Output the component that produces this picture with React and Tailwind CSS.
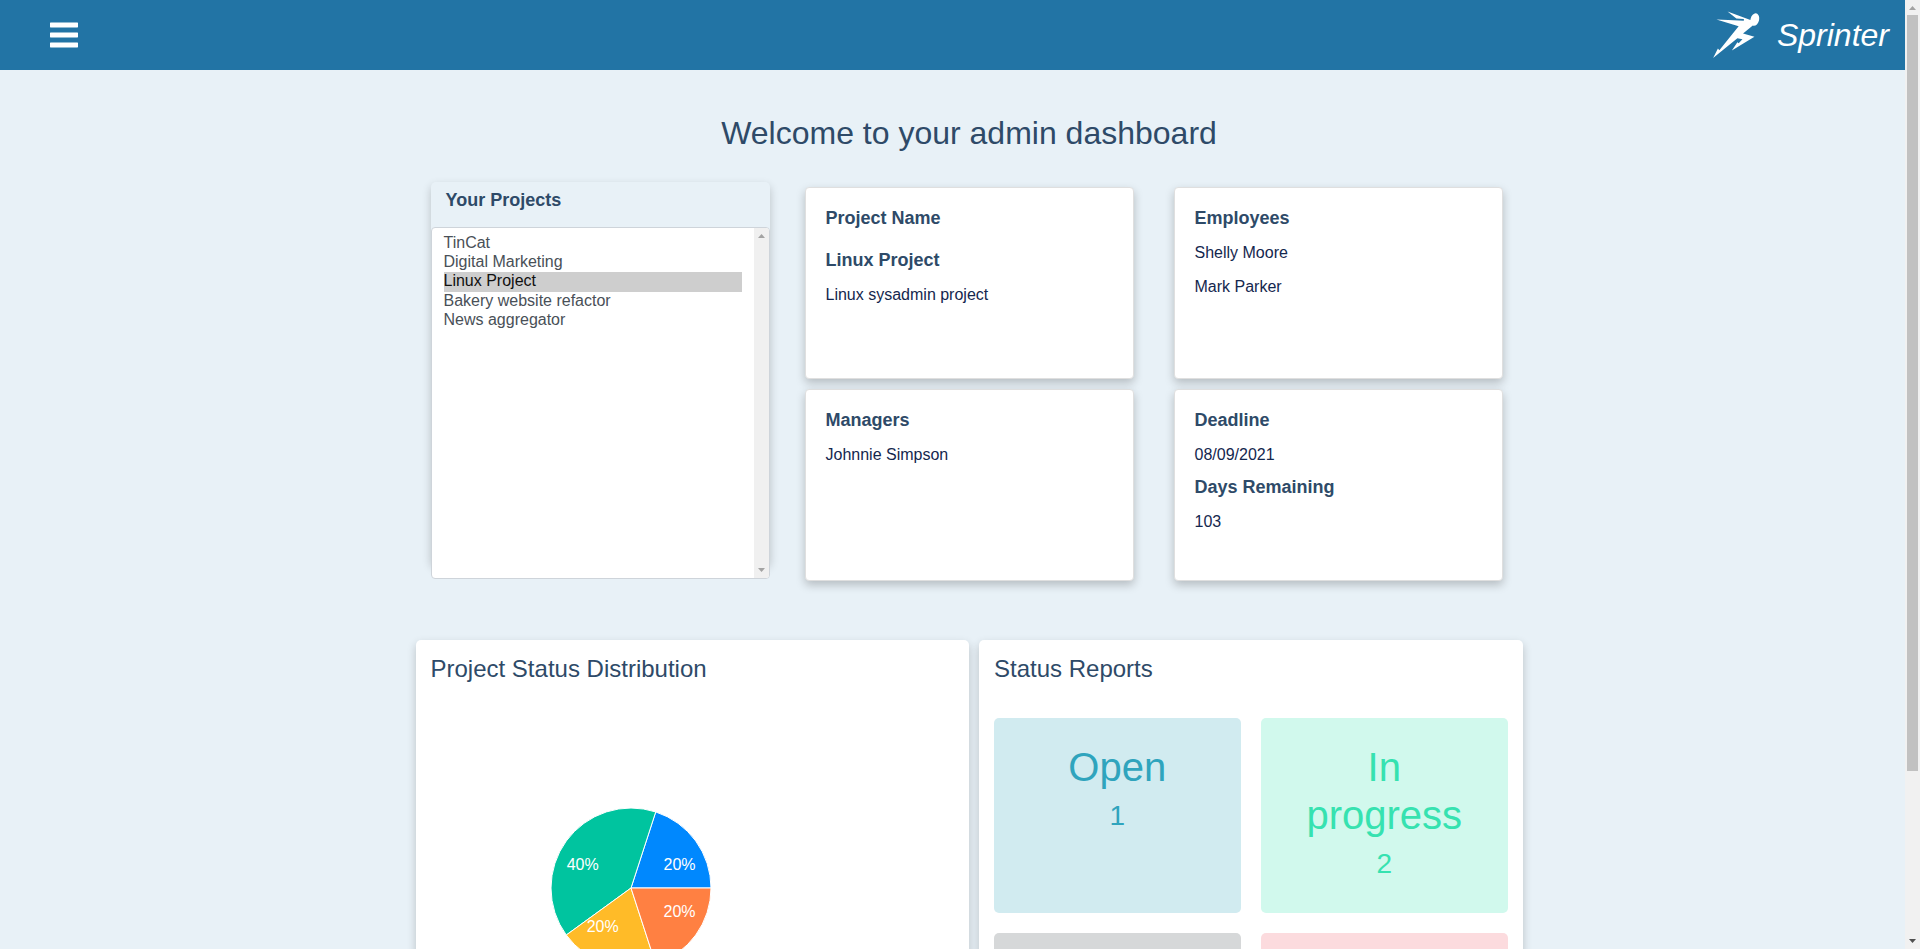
import { GiSprint } from "react-icons/gi";

const SANS = "font-['Liberation_Sans',Arial,sans-serif]";

function Nav() {
  return (
    <nav className="flex h-[70px] items-center justify-between bg-[#2274a5] pl-[50px] pr-4 text-white">
      <svg viewBox="0 0 28 26" className="h-[26px] w-[28px]" fill="#fff">
        <rect x="0" y="0.4" width="28" height="5" rx="0.6" />
        <rect x="0" y="10.4" width="28" height="5" rx="0.6" />
        <rect x="0" y="20.4" width="28" height="5" rx="0.6" />
      </svg>
      <div className="flex items-center gap-4">
        <GiSprint className="size-[50px]" />
        <span className="text-[32px] leading-none italic">Sprinter</span>
      </div>
    </nav>
  );
}

const projects = ["TinCat", "Digital Marketing", "Linux Project", "Bakery website refactor", "News aggregator"];

function ProjectList() {
  return (
    <section className="h-[382px] w-[339px] rounded-[5px] shadow-[0_4px_10px_0_rgba(0,0,0,0.2)]">
      <h2 className="h-[45px] pl-[14.5px] pt-[7px] text-[18px] leading-[22px] font-bold text-[#2e4a68]">Your Projects</h2>
      <div className="flex h-[352px] justify-between overflow-hidden rounded-[4px] border border-[#ced4da] bg-white">
        <ul className="w-[310px] pl-[11.5px] pt-[5px] text-[16px] text-[#495057]">
          {projects.map((p) => (
            <li key={p} className={p === "Linux Project" ? "mt-px -mb-px h-5 bg-[#cecece] leading-[17px] text-[#101010]" : "h-[19px] leading-[19px]"}>
              {p}
            </li>
          ))}
        </ul>
        <div className="flex w-[15px] flex-col items-center justify-between bg-[#f0f0f0] py-[6px]">
          <svg className="h-1 w-[7px]" viewBox="0 0 7 4" fill="#a3a3a3"><path d="M3.5 0 7 4H0z" /></svg>
          <svg className="h-1 w-[7px]" viewBox="0 0 7 4" fill="#a3a3a3"><path d="M0 0h7L3.5 4z" /></svg>
        </div>
      </div>
    </section>
  );
}

function Heading({ children }) {
  return <h3 className="text-[18px] leading-[22px] font-bold text-[#2e4a68]">{children}</h3>;
}

function Line({ children }) {
  return <p className="text-[16px] leading-[24px] text-[#14274e]">{children}</p>;
}

function Card({ children }) {
  return (
    <div className="flex h-[192px] w-[329px] flex-col rounded-[4px] border border-[#dfdfdf] bg-white pl-[19.5px] pt-[19px] shadow-[0_4px_10px_0_rgba(0,0,0,0.22)]">
      {children}
    </div>
  );
}

function StatusPie() {
  const slices = [
    { d: "M80 80 160 80A80 80 0 0 0 104.72 3.92Z", fill: "#0088fe", x: 112.5, y: 62, t: "20%" },
    { d: "M80 80 104.72 3.92A80 80 0 0 0 15.28 127.02Z", fill: "#00c49f", x: 15.7, y: 62, t: "40%" },
    { d: "M80 80 15.28 127.02A80 80 0 0 0 104.72 156.08Z", fill: "#ffbb28", x: 35.7, y: 124, t: "20%" },
    { d: "M80 80 104.72 156.08A80 80 0 0 0 160 80Z", fill: "#ff8042", x: 112.5, y: 109, t: "20%" },
  ];
  return (
    <svg viewBox="0 0 160 160" className="size-[160px] overflow-visible">
      {slices.map((s) => <path key={s.fill} d={s.d} fill={s.fill} stroke="#fff" />)}
      {slices.map((s) => <text key={s.fill} x={s.x} y={s.y} fill="#fff" className="text-[16px]">{s.t}</text>)}
    </svg>
  );
}

function Status({ name, count, className }) {
  return (
    <div className={`flex h-[195px] flex-col items-center rounded-[5px] pl-10 pr-[40.5px] pt-[25px] text-center ${className}`}>
      <div className="mb-2 text-[40px] leading-[48px]">{name}</div>
      <div className="text-[28px] leading-[34px]">{count}</div>
    </div>
  );
}

function PageScrollbar() {
  return (
    <div className="flex w-[15px] flex-col items-center bg-[#f1f1f1]">
      <svg className="mt-[6px] h-1 w-[7px]" viewBox="0 0 7 4" fill="#a3a3a3"><path d="M3.5 0 7 4H0z" /></svg>
      <div className="mt-[5px] h-[756px] w-[11px] bg-[#c1c1c1]" />
      <svg className="mt-auto mb-[6px] h-1 w-[7px]" viewBox="0 0 7 4" fill="#505050"><path d="M0 0h7L3.5 4z" /></svg>
    </div>
  );
}

export default function App() {
  return (
    <div className={`flex h-[949px] w-[1920px] overflow-hidden ${SANS}`}>
      <div className="w-[1905px] bg-[#e8f1f7]">
        <Nav />
        <h1 className="mt-[44px] pl-[33px] text-center text-[32px] leading-[38px] text-[#2e4a68]">Welcome to your admin dashboard</h1>
        <div className="mt-[30px] flex h-[458px] pl-[431px]">
          <ProjectList />
          <div className="mt-[5px] ml-[35px] grid auto-rows-min grid-cols-[329px_329px] gap-x-10 gap-y-[10px]">
            <Card>
              <Heading>Project Name</Heading>
              <div className="mt-5 mb-3"><Heading>Linux Project</Heading></div>
              <Line>Linux sysadmin project</Line>
            </Card>
            <Card>
              <Heading>Employees</Heading>
              <div className="mt-3 flex flex-col gap-[10px]">
                <Line>Shelly Moore</Line>
                <Line>Mark Parker</Line>
              </div>
            </Card>
            <Card>
              <div className="mb-3"><Heading>Managers</Heading></div>
              <Line>Johnnie Simpson</Line>
            </Card>
            <Card>
              <Heading>Deadline</Heading>
              <div className="mt-3 mb-[9px]"><Line>08/09/2021</Line></div>
              <Heading>Days Remaining</Heading>
              <div className="mt-3"><Line>103</Line></div>
            </Card>
          </div>
        </div>
        <div className="flex gap-[10px] pl-[416px]">
          <section className="flex h-[500px] w-[553px] flex-col rounded-[5px] bg-white px-[14.5px] pt-[15px] shadow-[0_4px_10px_0_rgba(0,0,0,0.2)]">
            <h2 className="text-[24px] leading-[28px] text-[#2e4a68]">Project Status Distribution</h2>
            <div className="mt-[125px] ml-[120.5px]"><StatusPie /></div>
          </section>
          <section className="flex h-[500px] w-[544px] flex-col rounded-[5px] bg-white px-[15px] pt-[15px] shadow-[0_4px_10px_0_rgba(0,0,0,0.2)]">
            <h2 className="text-[24px] leading-[28px] text-[#2e4a68]">Status Reports</h2>
            <div className="mt-[35px] grid grid-cols-2 gap-5">
              <Status name="Open" count="1" className="bg-[#d1ebf0] text-[#2fa4bd]" />
              <Status name="In progress" count="2" className="bg-[#d1f9ed] text-[#36e2b0]" />
              <div className="h-[195px] rounded-[5px] bg-[#d6d8d9]" />
              <div className="h-[195px] rounded-[5px] bg-[#fcdbde]" />
            </div>
          </section>
        </div>
      </div>
      <PageScrollbar />
    </div>
  );
}
